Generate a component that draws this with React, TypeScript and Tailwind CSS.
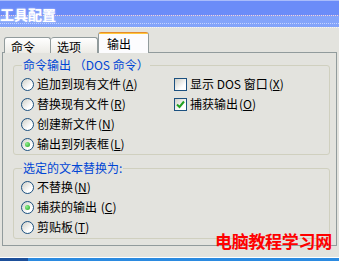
import React from "react";

const FONT = "font-['Noto_Sans_CJK_SC','Noto_Sans',sans-serif]";

const Key = ({ k }: { k: string }) => (
    <span className="ml-[1px]">
        (<span className="underline underline-offset-1">{k}</span>)
    </span>
);

const Radio = ({ label, k, checked = false }: { label: string; k: string; checked?: boolean }) => (
    <div className="flex items-center h-[20px]">
        <span className="w-[13px] h-[13px] rounded-full border border-[#1c5180] bg-[linear-gradient(135deg,#cfcfc7,#ffffff_70%)] flex items-center justify-center shrink-0">
            {checked && <span className="w-[5px] h-[5px] rounded-full bg-[radial-gradient(circle_at_35%_35%,#8ef08e,#21a121)]" />}
        </span>
        <span className="ml-[3px] text-[12px] leading-none text-black">
            {label}
            <Key k={k} />
        </span>
    </div>
);

const Check = ({ label, k, checked = false }: { label: string; k: string; checked?: boolean }) => (
    <div className="flex items-center h-[20px]">
        <span className="w-[13px] h-[13px] border border-[#1c5180] bg-[linear-gradient(135deg,#cfcfc7,#ffffff_70%)] flex items-center justify-center shrink-0">
            {checked && (
                <svg width="9" height="9" viewBox="0 0 9 9">
                    <path d="M1 4.5 L3.5 7 L8 1.5" fill="none" stroke="#21a121" strokeWidth="2" />
                </svg>
            )}
        </span>
        <span className="ml-[3px] text-[12px] leading-none text-black whitespace-pre">
            {label}
            <Key k={k} />
        </span>
    </div>
);

export default function App() {
    return (
        <div className={`relative w-[339px] h-[261px] overflow-hidden bg-[#e3e3de] ${FONT}`}>
            {/* Title bar */}
            <div className="h-[27px] flex flex-col">
                <div className="h-[1px] bg-[#a9bcfb]" />
                <div className="h-[14px] bg-[#6b8cf8] relative">
                    <span className="absolute left-[0px] top-[6px] text-[14px] leading-none font-bold text-white [text-shadow:0_0_2px_#c8d4ff]">
                        工具配置
                    </span>
                </div>
                <div className="h-[1px] border-t border-dotted border-[#9a8cf0]" />
                <div className="flex-1 bg-[#84a4fa] flex flex-col">
                    <div className="h-[7px]" />
                    <div className="h-[1px] border-t border-dotted border-[#c6d4ff]" />
                </div>
                <div className="h-[1px] bg-[#84a4fa]" />
            </div>
            <div className="h-[1px] border-t border-dotted border-white/70" />

            {/* Tabs + panel */}
            <div className="pl-[2px] pt-[4px]">
                <div className="flex items-end h-[21px] pl-[2px] relative z-10 text-[12px] leading-none">
                    <div className="w-[47px] h-[16px] border border-b-0 border-[#919b9c] rounded-t-[3px] bg-[linear-gradient(#ffffff,#ecebe6)] pl-[6px] pt-[3px]">
                        命令
                    </div>
                    <div className="w-[47px] h-[16px] border border-b-0 border-l-0 border-[#919b9c] rounded-t-[3px] bg-[linear-gradient(#ffffff,#ecebe6)] pl-[6px] pt-[3px]">
                        选项
                    </div>
                    <div className="w-[51px] h-[21px] border border-t-0 border-b-0 border-[#919b9c] rounded-t-[3px] bg-[#fcfcfe] flex flex-col">
                        <div className="h-[2px] bg-[#ffc83c] rounded-t-[3px] border-t border-[#e68b2c]" />
                        <div className="pl-[8px] pt-[4px]">输出</div>
                    </div>
                </div>
                <div className="-mt-[1px] w-[335px] h-[194px] border border-[#919b9c] pl-[10px] pt-[4px]">
                    <fieldset className="w-[317px] h-[98px] border border-[#d0d0bf] rounded-[3px] pl-[7px]">
                        <legend className="ml-[1px] px-[1px] text-[12px] leading-[16px] text-[#0046d5]">
                            命令输出 （DOS 命令）
                        </legend>
                        <div className="flex pt-[1px]">
                            <div className="w-[153px] flex flex-col">
                                <Radio label="追加到现有文件" k="A" />
                                <Radio label="替换现有文件" k="R" />
                                <Radio label="创建新文件" k="N" />
                                <Radio label="输出到列表框" k="L" checked />
                            </div>
                            <div className="flex flex-col">
                                <Check label="显示 DOS 窗口" k="X" />
                                <Check label="捕获输出" k="O" checked />
                            </div>
                        </div>
                    </fieldset>
                    <fieldset className="mt-[5px] w-[317px] h-[79px] border border-[#d0d0bf] rounded-[3px] pl-[7px]">
                        <legend className="ml-[1px] px-[1px] text-[12px] leading-[16px] text-[#0046d5]">
                            选定的文本替换为:
                        </legend>
                        <div className="flex flex-col pt-[1px]">
                            <Radio label="不替换" k="N" />
                            <Radio label="捕获的输出 " k="C" checked />
                            <Radio label="剪贴板" k="T" />
                        </div>
                    </fieldset>
                </div>
            </div>

            {/* Bottom strip */}
            <div className="absolute left-0 right-0 bottom-0 h-[4px] flex flex-col">
                <div className="h-[1px] bg-white" />
                <div className="flex-1 flex">
                    <div className="w-[28px] bg-[#1d4f9a]" />
                    <div className="flex-1 bg-[#2b8ae0]" />
                </div>
            </div>

            {/* Watermark */}
            <div className="absolute left-[215px] top-[232px] text-[17px] leading-none font-bold text-[#ff0000] tracking-[-0.3px]">
                电脑教程学习网
            </div>
        </div>
    );
}
